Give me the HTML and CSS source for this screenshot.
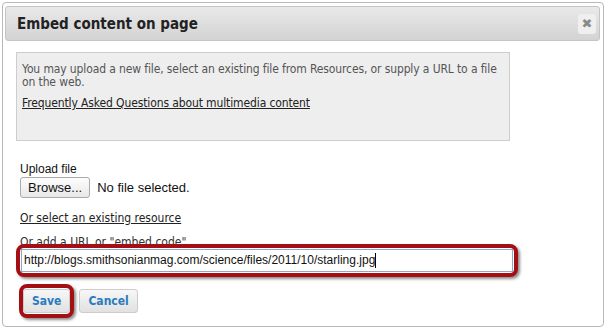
FILE: index.html
```html
<!DOCTYPE html>
<html>
<head>
	<meta charset="utf-8">
	<title>Embed content on page</title>
	<link rel="stylesheet" href="styles.css">
</head>
<body>

<section class="dialog">
	<header class="dialog-header">
		<h2>Embed content on page</h2>
		<span class="close">&#10006;</span>
	</header>
	<div class="dialog-body">
		<div class="info">
			<p>You may upload a new file, select an existing file from Resources, or supply a URL to a file on the web.</p>
			<p><a href="#">Frequently Asked Questions about multimedia content</a></p>
		</div>

		<div class="upload">
			<label>Upload file</label>
			<div class="file-row">
				<span class="browse">Browse...</span>
				<span class="file-name">No file selected.</span>
			</div>
		</div>

		<p class="resource"><a href="#">Or select an existing resource</a></p>

		<label class="url-label">Or add a URL or "embed code"</label>
		<div class="callout callout-wide">
			<div class="url-input">http://blogs.smithsonianmag.com/science/files/2011/10/starling.jpg<span class="caret"></span></div>
		</div>

		<div class="actions">
			<div class="callout callout-small">
				<span class="btn">Save</span>
			</div>
			<span class="btn">Cancel</span>
		</div>
	</div>
</section>

</body>
</html>
```
FILE: styles.css
```css
body {
	margin: 0;
	padding: 2px;
	background-color: #fff;
	font-family: 'DejaVu Sans Condensed', 'DejaVu Sans', sans-serif;
	color: #333;
}

.dialog {
	width: 600px;
	height: 323px;
	border: 1px solid #b8b8b8;
	border-radius: 4px;
	background-color: #fff;
}

.dialog-header {
	display: flex;
	align-items: center;
	justify-content: space-between;
	height: 33px;
	margin: 3px 3px 0 2px;
	padding: 0 3px 0 11px;
	border: 1px solid #c4c4c4;
	border-radius: 3px;
	background: linear-gradient(#e9e9e9, #d3d3d3);
}

.dialog-header h2 {
	margin: 0;
	font-size: 15px;
	font-weight: bold;
	color: #222;
}

.close {
	display: flex;
	align-items: center;
	justify-content: center;
	width: 18px;
	height: 20px;
	border-radius: 3px;
	background-color: #efefef;
	color: #8a8a8a;
	font-family: 'DejaVu Sans', sans-serif;
	font-size: 13px;
}

.dialog-body {
	padding: 11px 0 0 13px;
}

.info {
	width: 482px;
	height: 77px;
	padding: 10px 5px 0 5px;
	background-color: #eee;
	border: 1px solid #cdcdcd;
	font-size: 12px;
	letter-spacing: -0.12px;
	color: #555;
}

.info p {
	margin: 0 0 8px;
	line-height: 13px;
}

a {
	color: #222;
	text-decoration: underline;
}

.upload {
	margin-top: 21px;
	padding-left: 4px;
	font-family: 'Liberation Sans', Arial, sans-serif;
	font-size: 12px;
	color: #111;
}

.upload label {
	display: block;
	line-height: 14px;
}

.file-row {
	display: flex;
	align-items: center;
	gap: 7px;
	margin-top: 1px;
	font-size: 13px;
}

.browse {
	display: inline-block;
	padding: 2px 7px;
	border: 1px solid #aaa;
	border-radius: 3px;
	background: linear-gradient(#fdfdfd, #e8e8e8);
}

.resource {
	margin: 13px 0 0 4px;
	font-size: 12px;
}

.url-label {
	display: block;
	margin: 11px 0 0 4px;
	font-size: 12px;
	color: #333;
	line-height: 12px;
	height: 8px;
}

.callout {
	border: 4px solid #a30f13;
	border-radius: 8px;
	box-shadow: 2px 2px 3px rgba(0, 0, 0, .45);
	position: relative;
	z-index: 1;
	background-color: #fff;
}

.callout-wide {
	width: 494px;
}

.url-input {
	margin: 1px;
	padding: 3px 3px 3px 2px;
	border: 1px solid #8fa9c4;
	background-color: #fff;
	font-family: 'Liberation Sans', Arial, sans-serif;
	font-size: 12px;
	color: #111;
	line-height: 15px;
}

.caret {
	display: inline-block;
	width: 1px;
	height: 15px;
	background-color: #000;
	vertical-align: top;
}

.actions {
	display: flex;
	align-items: center;
	gap: 5px;
	margin: 7px 0 0 3px;
}

.callout-small {
	padding: 1px 0;
}

.btn {
	display: inline-block;
	padding: 4px 8px;
	border: 1px solid #ccc;
	border-radius: 3px;
	background: linear-gradient(#f7f7f7, #e1e1e1);
	color: #2b7bbd;
	font-family: 'DejaVu Sans Condensed', 'DejaVu Sans', sans-serif;
	font-size: 12px;
	font-weight: bold;
	line-height: 14px;
}
```
